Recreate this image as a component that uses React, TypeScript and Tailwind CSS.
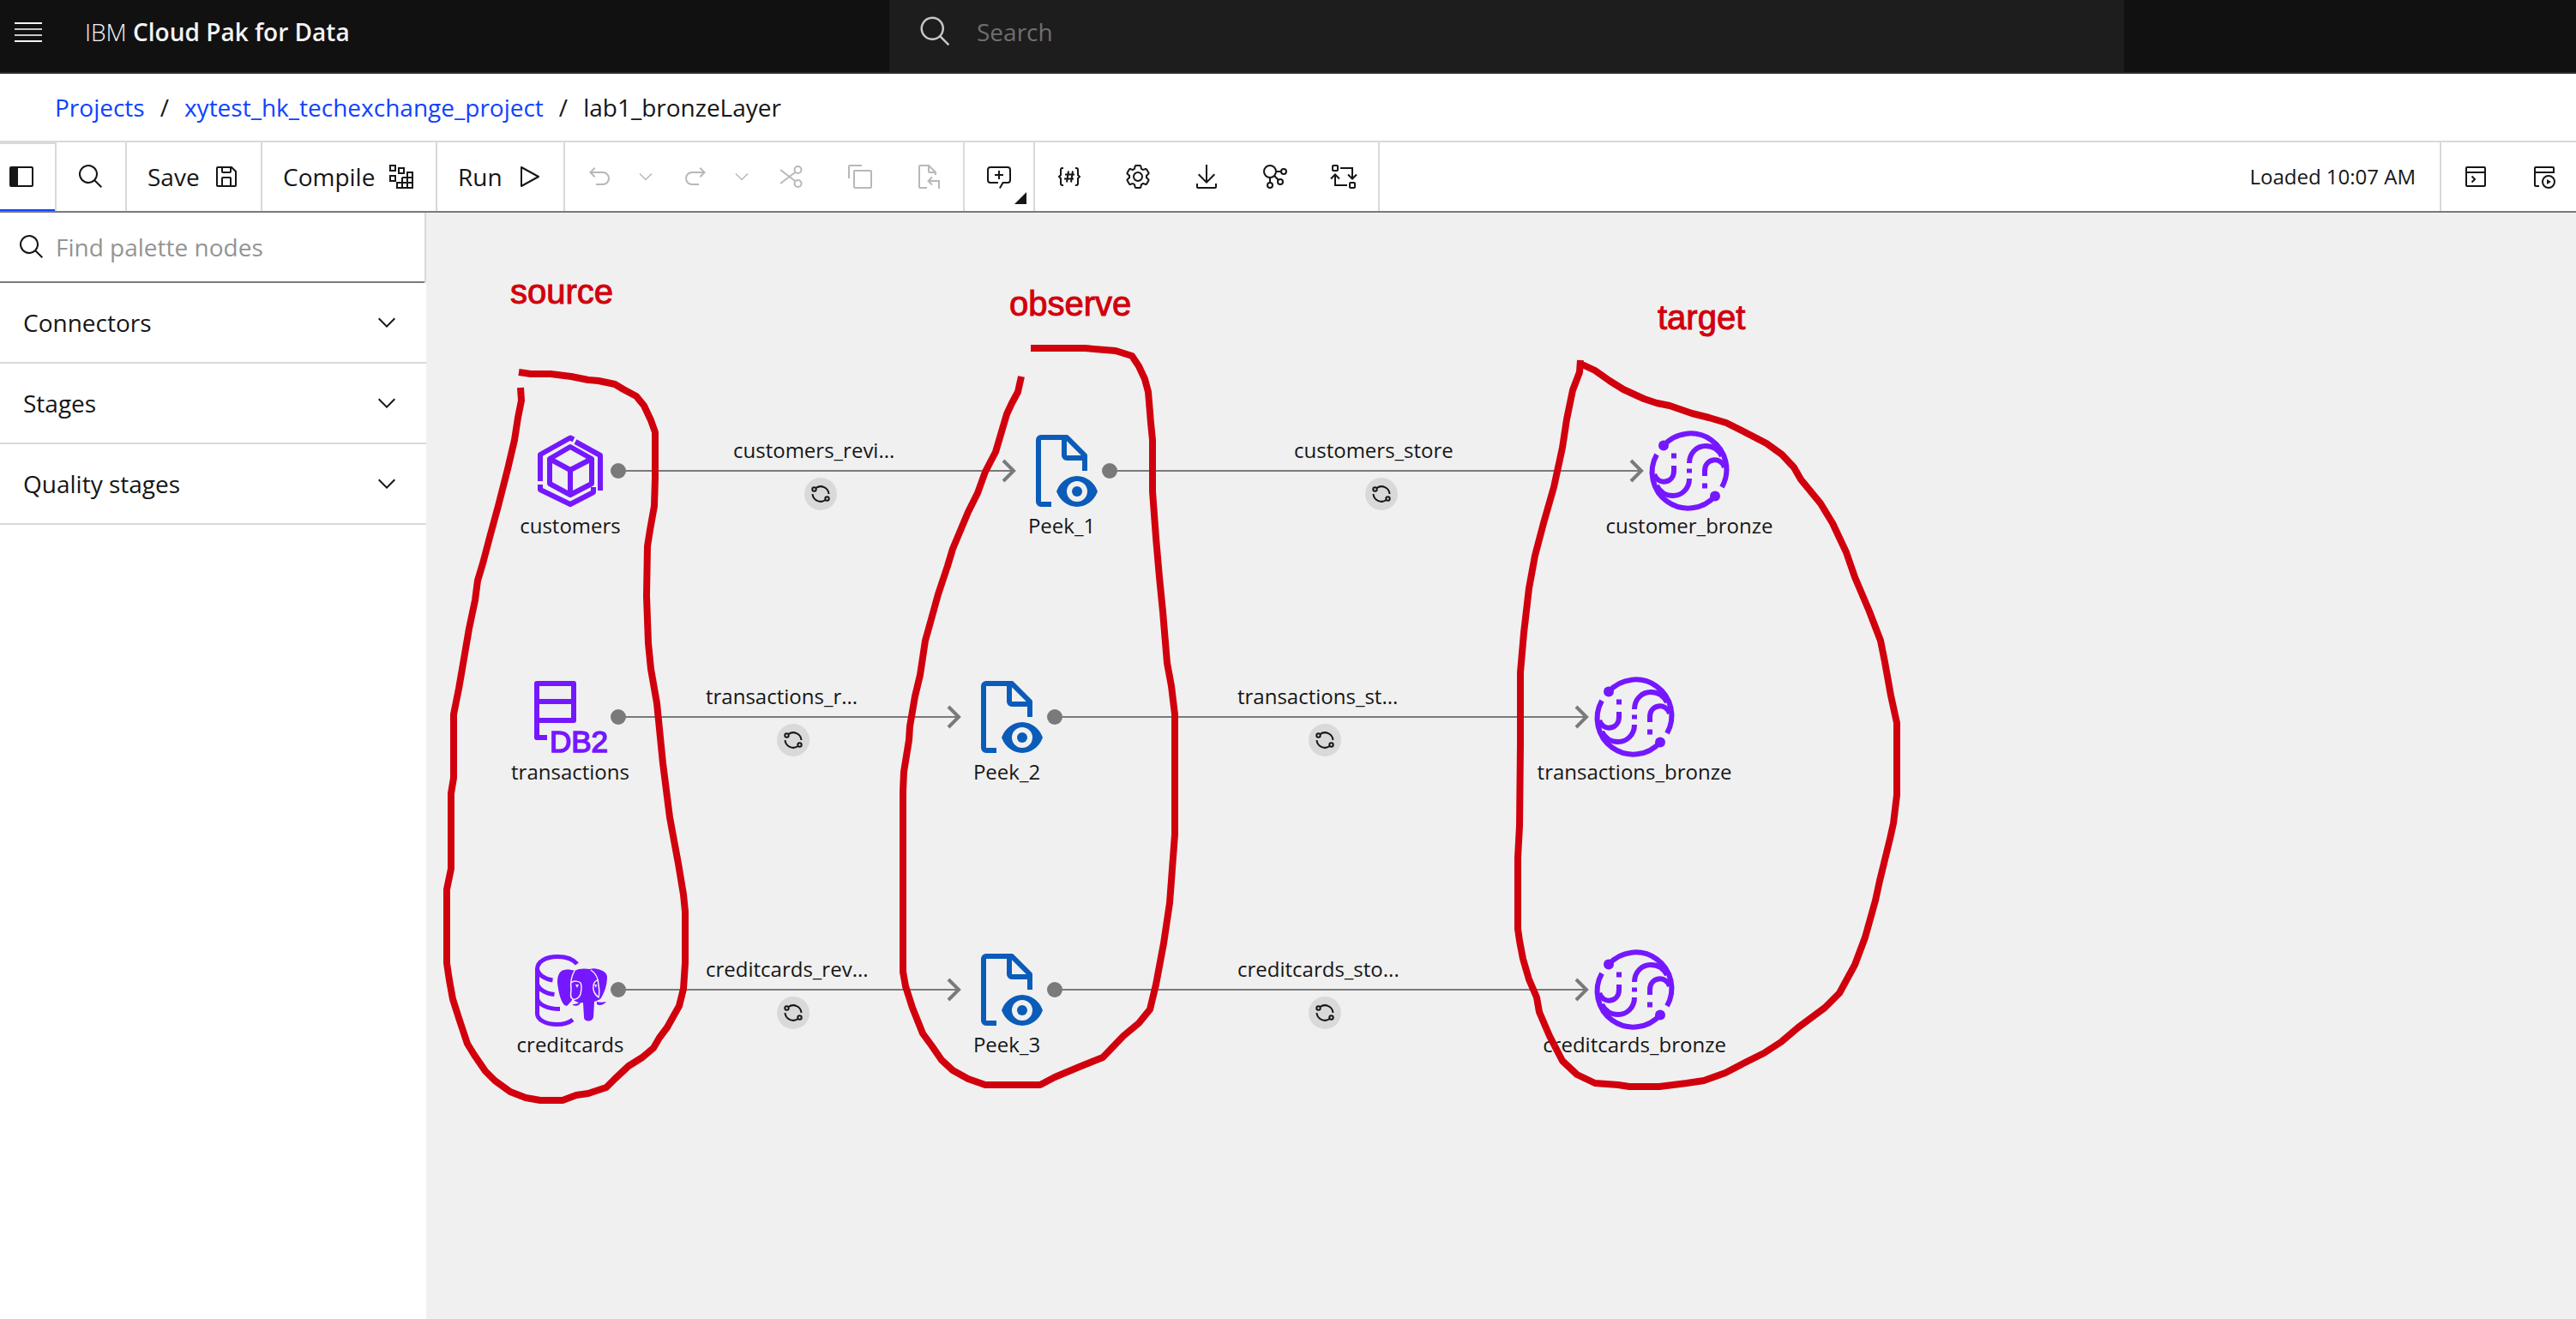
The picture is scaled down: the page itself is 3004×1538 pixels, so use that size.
import React from "react";

type IconProps = { className?: string; children: React.ReactNode };

/* 32-unit icon drawn with filled shapes */
function Solid({ className = "size-8", children }: IconProps) {
  return (
    <svg viewBox="0 0 32 32" fill="currentColor" aria-hidden="true" className={`shrink-0 ${className}`}>
      {children}
    </svg>
  );
}

/* 32-unit icon drawn with 2-unit strokes */
function Line({ className = "size-8", children }: IconProps) {
  return (
    <svg viewBox="0 0 32 32" fill="none" stroke="currentColor" strokeWidth="2" aria-hidden="true" className={`shrink-0 ${className}`}>
      {children}
    </svg>
  );
}

const SearchIcon = ({ className }: { className?: string }) => (
  <Solid className={className}>
    <path d="M29,27.586l-7.552-7.552a11.018,11.018,0,1,0-1.414,1.414L27.586,29ZM4,13a9,9,0,1,1,9,9A9.01,9.01,0,0,1,4,13Z" />
  </Solid>
);

const ChevronDown = ({ className }: { className?: string }) => (
  <Solid className={className}>
    <path d="M16 22 6 12l1.4-1.4 8.6 8.6 8.6-8.6L26 12z" />
  </Solid>
);

const PanelIcon = () => (
  <Solid>
    <path d="M28,4H4A2,2,0,0,0,2,6V26a2,2,0,0,0,2,2H28a2,2,0,0,0,2-2V6A2,2,0,0,0,28,4Zm0,22H12V6H28Z" />
  </Solid>
);

const SaveIcon = () => (
  <Solid>
    <path d="M27.71,9.29l-5-5A1,1,0,0,0,22,4H6A2,2,0,0,0,4,6V26a2,2,0,0,0,2,2H26a2,2,0,0,0,2-2V10A1,1,0,0,0,27.71,9.29ZM12,6h8v4H12Zm8,20H12V18h8Zm2,0V18a2,2,0,0,0-2-2H12a2,2,0,0,0-2,2v8H6V6h4v4a2,2,0,0,0,2,2h8a2,2,0,0,0,2-2V6.41l4,4V26Z" />
  </Solid>
);

const CompileIcon = () => (
  <Line>
    <path d="M3 3h6v6H3zM13 6h6v6h-6zM23 11h6v6h-6zM3 15h6v6H3z" />
    <path d="M17 17h12v12H11v-6h18M17 17v12M23 17v12" />
  </Line>
);

const RunIcon = () => (
  <Line>
    <path d="M7 5v22l20-11z" strokeLinejoin="round" />
  </Line>
);

const UndoIcon = () => (
  <Solid>
    <path d="M20,10H7.815l3.587-3.586L10,5,4,11,10,17l1.402-1.415L7.818,12H20a6,6,0,0,1,0,12H12v2h8a8,8,0,0,0,0-16Z" />
  </Solid>
);

const RedoIcon = () => (
  <Solid>
    <path d="M12,10H24.185l-3.587-3.586L22,5,28,11,22,17l-1.402-1.415L24.182,12H12a6,6,0,0,0,0,12h8v2H12a8,8,0,0,1,0-16Z" />
  </Solid>
);

const CutIcon = () => (
  <Line>
    <circle cx="23.5" cy="8" r="4" />
    <circle cx="23.5" cy="24" r="4" />
    <path d="M3 8l17.5 13.2M3 24L20.500 10.800" />
  </Line>
);

const CopyIcon = () => (
  <Line>
    <rect x="9" y="9" width="20" height="20" rx="1" />
    <path d="M3 18V4a1 1 0 0 1 1-1h14" />
  </Line>
);

const PasteIcon = () => (
  <Line>
    <path d="M14 29H6a1 1 0 0 1-1-1V4a1 1 0 0 1 1-1h10l8 8v3M16 3v7a1 1 0 0 0 1 1h7" />
    <path d="M20 16.500l-4.500 4.500 4.500 4.500M15.500 21H28v9" />
  </Line>
);

const CommentIcon = () => (
  <Solid>
    <path d="M17.74,30,16,29l4-7h6a2,2,0,0,0,2-2V8a2,2,0,0,0-2-2H6A2,2,0,0,0,4,8V20a2,2,0,0,0,2,2h9v2H6a4,4,0,0,1-4-4V8A4,4,0,0,1,6,4H26a4,4,0,0,1,4,4V20a4,4,0,0,1-4,4H21.160Z" />
    <path d="M17 9h-2v4h-4v2h4v4h2v-4h4v-2h-4z" />
  </Solid>
);

const ParameterIcon = () => (
  <Line>
    <path d="M9 6H8a2 2 0 0 0-2 2v6l-2 2 2 2v6a2 2 0 0 0 2 2h1M23 6h1a2 2 0 0 1 2 2v6l2 2-2 2v6a2 2 0 0 1-2 2h-1" />
    <path d="M15 9.500l-2 13M20 9.500l-2 13M11 13.500h11M10 18.500h11" />
  </Line>
);

const GearIcon = () => (
  <Solid>
    <path d="M27,16.76c0-.25,0-.5,0-.76s0-.51,0-.77l1.920-1.680A2,2,0,0,0,29.300,11L26.940,7a2,2,0,0,0-1.730-1,2,2,0,0,0-.64.1l-2.430.82a11.350,11.350,0,0,0-1.310-.75l-.51-2.520a2,2,0,0,0-2-1.610H13.640a2,2,0,0,0-2,1.610l-.51,2.520a11.480,11.480,0,0,0-1.320.75L7.430,6.060A2,2,0,0,0,6.790,6,2,2,0,0,0,5.060,7L2.700,11a2,2,0,0,0,.41,2.510L5,15.240c0,.25,0,.5,0,.76s0,.51,0,.77L3.110,18.450A2,2,0,0,0,2.700,21L5.060,25a2,2,0,0,0,1.730,1,2,2,0,0,0,.64-.1l2.430-.82a11.350,11.350,0,0,0,1.310.75l.51,2.520a2,2,0,0,0,2,1.610h4.720a2,2,0,0,0,2-1.610l.51-2.520a11.480,11.480,0,0,0,1.320-.75l2.420.82a2,2,0,0,0,.64.1,2,2,0,0,0,1.730-1L29.300,21a2,2,0,0,0-.41-2.510ZM25.210,24l-3.430-1.160a8.860,8.860,0,0,1-2.710,1.570L18.360,28H13.640l-.71-3.550a9.360,9.360,0,0,1-2.700-1.570L6.790,24,4.430,20l2.720-2.400a8.900,8.900,0,0,1,0-3.130L4.430,12,6.790,8l3.430,1.160a8.860,8.860,0,0,1,2.710-1.570L13.640,4h4.720l.71,3.550a9.360,9.360,0,0,1,2.700,1.570L25.210,8,27.570,12l-2.720,2.400a8.900,8.900,0,0,1,0,3.130L27.570,20Z" />
    <path d="M16,22a6,6,0,1,1,6-6A5.940,5.940,0,0,1,16,22Zm0-10a3.910,3.910,0,0,0-4,4,3.910,3.910,0,0,0,4,4,3.910,3.910,0,0,0,4-4A3.910,3.910,0,0,0,16,12Z" />
  </Solid>
);

const DownloadIcon = () => (
  <Solid>
    <path d="M26,24v4H6V24H4v4a2,2,0,0,0,2,2H26a2,2,0,0,0,2-2V24ZM26 14l-1.410-1.410L17 20.170V2h-2v18.170l-7.590-7.580L6 14l10 10z" />
  </Solid>
);

const FlowIcon = () => (
  <Line>
    <circle cx="10" cy="10" r="7" />
    <circle cx="26" cy="10" r="3" />
    <circle cx="22" cy="22" r="3" />
    <circle cx="10" cy="26" r="3" />
    <path d="M17 10h6M15 15l5 5M10 17v6" />
  </Line>
);

const ReplaceIcon = () => (
  <Line>
    <rect x="3" y="3" width="6" height="6" rx="1" />
    <rect x="23" y="23" width="6" height="6" rx="1" />
    <path d="M12 6h14v12M21 13.500l5 5 5-5M20 26H6V14M1 18.500l5-5 5 5" />
  </Line>
);

const ConsoleIcon = () => (
  <Line>
    <rect x="5" y="5" width="22" height="22" rx="1" />
    <path d="M5 11h22M11.500 15.500l3.500 3.500-3.500 3.500" />
  </Line>
);

const HistoryIcon = () => (
  <Line>
    <path d="M10 27H6a1 1 0 0 1-1-1V6a1 1 0 0 1 1-1h20a1 1 0 0 1 1 1v5H5" />
    <circle cx="21" cy="22" r="7" />
    <path d="M19 19v6l5-3z" fill="currentColor" stroke="none" />
  </Line>
);

const SyncIcon = () => (
  <svg viewBox="0 0 24 24" fill="none" stroke="currentColor" strokeWidth="2" aria-hidden="true" className="size-6">
    <circle cx="4.500" cy="6.500" r="2.200" />
    <circle cx="19.500" cy="17.500" r="2.200" />
    <path d="M6.500 5A9.500 9.500 0 0 1 21.500 12M2.500 12A9.500 9.500 0 0 0 17.500 19" />
  </svg>
);

const nodeIconClass = "size-24 shrink-0 overflow-visible";

const CubeArt = () => (
  <svg viewBox="0 0 96 96" fill="none" stroke="#7517ff" strokeWidth="6" strokeLinejoin="round" aria-hidden="true" className={nodeIconClass}>
    <path d="M13 60V29L48 9.500l4 2" />
    <path d="M54 14l29 16v41" />
    <path d="M13 64v6l35 17 27-14v-6" />
    <path d="M48 20l25 14v29L48 76 24 63V34z" />
    <path d="M24 34l24 13 25-13M48 47v29" />
  </svg>
);

const Db2Art = () => (
  <svg viewBox="0 0 96 96" aria-hidden="true" className={nodeIconClass}>
    <path d="M21 72H9V9h43v43H9M9 30h43" fill="none" stroke="#7517ff" strokeWidth="6" strokeLinejoin="round" />
    <text x="24" y="89" fill="#7517ff" stroke="#7517ff" strokeWidth="1.500" className="font-['Liberation_Sans',sans-serif] text-[35px]">DB2</text>
  </svg>
);

const PostgresArt = () => (
  <svg viewBox="0 0 96 96" aria-hidden="true" className={nodeIconClass}>
    <g fill="none" stroke="#7517ff" strokeWidth="5">
      <path d="M56 18C51 12 42 9.500 33 9.500 20 9.500 9.500 15 9.500 24v52c0 7 10 12.500 23 12.500 7 0 14-2 18.500-5.500" />
      <path d="M9.500 24c1 6 8 11.500 18 13M9.500 41c1 6 9 11.500 20 12.500M9.500 58c1 7 11 12.500 26.500 12.500" />
    </g>
    <g fill="#7517ff">
      <path d="M53 26c-5-2-11-2-15 0-4 3-5 8-5 14 1 9 3 18 6 23 2 4 5 5 7 2l5-6c4 4 8 5 12 4l1 17c0 6 10 6 11 0l1-18c3-1 5-2 7-3 5-7 8-17 8-26 0-5-6-8-11-9-3-1-6-1-9 0-6-1-13-1-18 2z" />
      <path d="M51 65c4 0 6-1 9-3 0 4-5 6-9 4zM79 62c3 1 7 1 11 0-3 4-8 5-11 3z" />
    </g>
    <g fill="none" stroke="#f0f0f0" strokeWidth="1.500">
      <path d="M53 26c-4 7-5 14-4 21 0 6-2 10 2 12 4 1 8-2 9-6 1-5 2-9 0-13-2-2-8-3-11 0" />
      <path d="M72 25c6 4 9 11 9 18 1 5 1 10 0 14-4-3-7-8-6-14 1-5 3-6 6-6" />
    </g>
    <path d="M54 42h4l-2 4zM76 42h3l-1 4z" fill="#f0f0f0" />
  </svg>
);

const PeekArt = () => (
  <svg viewBox="0 0 32 32" fill="#0b5cb9" aria-hidden="true" className={nodeIconClass}>
    <circle cx="22" cy="24" r="2" />
    <path d="M29.777,23.479A8.640,8.640,0,0,0,22,18a8.640,8.640,0,0,0-7.777,5.479L14,24l.223.522A8.640,8.640,0,0,0,22,30a8.640,8.640,0,0,0,7.777-5.478L30,24ZM22,28a4,4,0,1,1,4-4A4.005,4.005,0,0,1,22,28Z" />
    <path d="M12,28H8V4h8v6a2.006,2.006,0,0,0,2,2h6v4h2V10a.909.909,0,0,0-.3-.7l-7-7A.909.909,0,0,0,18,2H8A2.006,2.006,0,0,0,6,4V28a2.006,2.006,0,0,0,2,2h4ZM18,4.400,23.600,10H18Z" />
  </svg>
);

const halfOrb = (
  <g>
    <path d="M18 18.500A42 42 0 0 1 86 67" />
    <circle cx="18" cy="18.500" r="6" fill="#7517ff" stroke="none" />
    <path d="M66 54v-6c0-15 19-17 23-4M48 39c0-12 9-20 19-20 9 0 15 4 19 12" />
    <path d="M27 27.500h6v6h-6z" fill="#7517ff" stroke="none" />
  </g>
);

const OrbArt = () => (
  <svg viewBox="0 0 96 96" fill="none" stroke="#7517ff" strokeWidth="6" aria-hidden="true" className={nodeIconClass}>
    {halfOrb}
    <g transform="rotate(180 48 48)">{halfOrb}</g>
    <path d="M45 45.500h6v5h-6z" fill="#7517ff" stroke="none" />
  </svg>
);

const nodes = [
  { label: "customers", Art: CubeArt, place: "left-[48px] top-[253px]" },
  { label: "transactions", Art: Db2Art, place: "left-[48px] top-[540px]" },
  { label: "creditcards", Art: PostgresArt, place: "left-[48px] top-[858px]" },
  { label: "Peek_1", Art: PeekArt, place: "left-[621px] top-[253px]" },
  { label: "Peek_2", Art: PeekArt, place: "left-[557px] top-[540px]" },
  { label: "Peek_3", Art: PeekArt, place: "left-[557px] top-[858px]" },
  { label: "customer_bronze", Art: OrbArt, place: "left-[1353px] top-[253px]" },
  { label: "transactions_bronze", Art: OrbArt, place: "left-[1289px] top-[540px]" },
  { label: "creditcards_bronze", Art: OrbArt, place: "left-[1289px] top-[858px]" },
];

const linkLabels = [
  { label: "customers_revi...", place: "left-[358px] top-[261px]" },
  { label: "transactions_r...", place: "left-[326px] top-[548px]" },
  { label: "creditcards_rev...", place: "left-[326px] top-[866px]" },
  { label: "customers_store", place: "left-[1012px] top-[261px]" },
  { label: "transactions_st...", place: "left-[946px] top-[548px]" },
  { label: "creditcards_sto...", place: "left-[946px] top-[866px]" },
];

const links = [
  { from: 224, to: 687, y: 301 },
  { from: 797, to: 1419, y: 301 },
  { from: 224, to: 623, y: 588 },
  { from: 733, to: 1355, y: 588 },
  { from: 224, to: 623, y: 906 },
  { from: 733, to: 1355, y: 906 },
];

const notes = [
  { label: "source", place: "left-[98px] top-[72px]" },
  { label: "observe", place: "left-[680px] top-[86px]" },
  { label: "target", place: "left-[1436px] top-[102px]" },
];

/* Freehand marker strokes, recorded in window coordinates */
const markerStrokes = [
  "605,434 619,436 642,436 666,439 686,443 698,444 717,448 727,454 742,462 751,473 759,490 764,504 764,557 763,590 758,618 755,637 754,695 756,750 759,780 766,820 773,890 781,953 791,1007 797,1043 799,1063 799,1123 797,1153 792,1173 778,1198 769,1210 762,1222 749,1233 733,1243 717,1258 707,1268 686,1275 672,1277 656,1283 630,1283 613,1280 595,1273 577,1260 566,1249 553,1230 545,1217 536,1190 528,1165 524,1143 521,1123 521,1037 526,1013 526,925 529,907 529,833 535,803 539,780 547,733 554,700 557,677 563,657 572,623 581,590 592,547 600,513 604,487 608,467 607,452",
  "1202,406 1265,406 1301,409 1320,415 1328,427 1335,442 1339,457 1342,493 1344,513 1344,573 1348,627 1352,673 1356,713 1361,773 1366,800 1370,833 1370,973 1367,1013 1364,1053 1357,1100 1348,1148 1341,1177 1328,1193 1310,1208 1286,1233 1261,1243 1230,1256 1213,1265 1149,1265 1129,1258 1111,1248 1098,1236 1087,1220 1076,1205 1064,1175 1056,1150 1053,1133 1053,923 1054,900 1060,863 1061,847 1067,812 1073,787 1079,747 1086,722 1094,693 1105,660 1111,640 1129,597 1140,575 1149,550 1161,527 1174,483 1180,470 1187,457 1191,439",
  "1843,424 1860,432 1877,444 1893,454 1917,465 1932,470 1947,473 1973,482 1993,487 2013,493 2033,503 2060,517 2078,530 2092,545 2100,559 2123,587 2137,610 2153,644 2163,673 2180,713 2193,747 2198,772 2205,811 2212,843 2212,927 2208,960 2204,978 2192,1027 2187,1050 2175,1093 2163,1125 2145,1158 2128,1175 2097,1198 2077,1215 2057,1228 2033,1240 2012,1251 1987,1260 1967,1263 1935,1267 1900,1267 1887,1265 1860,1263 1839,1253 1822,1237 1807,1208 1795,1180 1792,1163 1783,1142 1776,1118 1772,1097 1770,1083 1770,1000 1772,963 1773,868 1773,784 1777,738 1783,686 1790,648 1800,610 1812,568 1822,522 1827,489 1834,455 1842,434 1843,420",
];

function ToolButton({ label, disabled, className = "w-20", children }: { label: string; disabled?: boolean; className?: string; children: React.ReactNode }) {
  return (
    <button type="button" aria-label={label} disabled={disabled} className={`flex h-full shrink-0 items-center justify-center disabled:text-[#b8b8b8] ${className}`}>
      {children}
    </button>
  );
}

function Header() {
  return (
    <header className="grid h-[86px] grid-cols-[1037px_1fr_527px] border-b-2 border-[#2d2a2a] bg-[#111111] text-[#f4f4f4]">
      <div className="flex items-center gap-[50px] pb-[10px] pl-[17px]">
        <button type="button" aria-label="Open menu" className="flex w-8 flex-col gap-[5px]">
          <span className="h-0.5 bg-[#f4f4f4]" />
          <span className="h-0.5 bg-[#c6c6c6]" />
          <span className="h-0.5 bg-[#c6c6c6]" />
          <span className="h-0.5 bg-[#f4f4f4]" />
        </button>
        <a href="#home" className="text-[28px] leading-9">
          <span className="font-light">IBM</span> <span className="font-semibold">Cloud Pak for Data</span>
        </a>
      </div>
      <label className="flex items-center gap-7 bg-[#1d1d1d] pb-[10px] pl-[34px]">
        <SearchIcon className="size-10 text-[#c6c6c6]" />
        <input type="search" aria-label="Search" placeholder="Search" className="min-w-0 flex-1 bg-transparent text-[28px] leading-9 outline-none placeholder:text-[#6f6f6f]" />
      </label>
    </header>
  );
}

function Breadcrumb() {
  return (
    <nav aria-label="Breadcrumb" className="flex h-[78px] items-center gap-[18px] pl-16 text-[28px] leading-9">
      <a href="#projects" className="text-[#0f43fe]">Projects</a>
      <span>/</span>
      <a href="#project" className="text-[#0f43fe]">xytest_hk_techexchange_project</a>
      <span>/</span>
      <span aria-current="page">lab1_bronzeLayer</span>
    </nav>
  );
}

function Toolbar() {
  return (
    <div role="toolbar" aria-label="Flow actions" className="flex h-[84px] border-t-2 border-b-2 border-t-[#d9d9d9] border-b-[#7a7a7a]">
      <div className="flex border-r-2 border-[#d9d9d9]">
        <ToolButton label="Toggle palette" className="w-16 border-t-2 border-b-2 border-t-[#d9d9d9] border-b-[#0f43fe] pr-[14px]">
          <PanelIcon />
        </ToolButton>
      </div>
      <div className="flex border-r-2 border-[#d9d9d9]">
        <ToolButton label="Find in flow"><SearchIcon /></ToolButton>
      </div>
      <button type="button" className="flex w-[158px] items-center justify-between border-r-2 border-[#d9d9d9] px-6 text-[28px] leading-9">
        Save <SaveIcon />
      </button>
      <button type="button" className="flex w-[204px] items-center justify-between border-r-2 border-[#d9d9d9] px-6 text-[28px] leading-9">
        Compile <CompileIcon />
      </button>
      <button type="button" className="flex w-[149px] items-center justify-between border-r-2 border-[#d9d9d9] px-6 text-[28px] leading-9">
        Run <RunIcon />
      </button>
      <div className="flex border-r-2 border-[#d9d9d9]">
        <ToolButton label="Undo" disabled><UndoIcon /></ToolButton>
        <ToolButton label="Undo history" disabled className="w-8 pr-1"><ChevronDown className="size-6" /></ToolButton>
        <ToolButton label="Redo" disabled><RedoIcon /></ToolButton>
        <ToolButton label="Redo history" disabled className="w-8 pr-1"><ChevronDown className="size-6" /></ToolButton>
        <ToolButton label="Cut" disabled><CutIcon /></ToolButton>
        <ToolButton label="Copy" disabled><CopyIcon /></ToolButton>
        <ToolButton label="Paste" disabled><PasteIcon /></ToolButton>
      </div>
      <div className="relative flex border-r-2 border-[#d9d9d9]">
        <ToolButton label="Add comment"><CommentIcon /></ToolButton>
        <svg viewBox="0 0 14 14" aria-hidden="true" className="absolute right-2 bottom-2 size-[14px] fill-[#161616]">
          <path d="M14 0v14H0z" />
        </svg>
      </div>
      <div className="flex border-r-2 border-[#d9d9d9]">
        <ToolButton label="Parameters"><ParameterIcon /></ToolButton>
        <ToolButton label="Settings"><GearIcon /></ToolButton>
        <ToolButton label="Download"><DownloadIcon /></ToolButton>
        <ToolButton label="Lineage"><FlowIcon /></ToolButton>
        <ToolButton label="Convert flow"><ReplaceIcon /></ToolButton>
      </div>
      <p className="ml-auto flex items-center pr-7 text-[24px] leading-8">Loaded 10:07 AM</p>
      <div className="flex items-center gap-12 border-l-2 border-[#d9d9d9] pr-[21px] pl-6">
        <button type="button" aria-label="Show logs"><ConsoleIcon /></button>
        <button type="button" aria-label="Run history"><HistoryIcon /></button>
      </div>
    </div>
  );
}

function Palette() {
  return (
    <aside aria-label="Palette" className="w-[497px] shrink-0 bg-white">
      <div className="border-r-2 border-[#d9d9d9]">
        <label className="flex h-[82px] items-center gap-3 border-b-2 border-[#7a7a7a] pl-[21px]">
          <SearchIcon />
          <input type="search" aria-label="Find palette nodes" placeholder="Find palette nodes" className="min-w-0 flex-1 bg-transparent text-[28px] leading-9 outline-none placeholder:text-[#949494]" />
        </label>
      </div>
      {["Connectors", "Stages", "Quality stages"].map((name) => (
        <button key={name} type="button" aria-expanded="false" className="flex h-[94px] w-full items-center justify-between border-b-2 border-[#d9d9d9] pr-[30px] pl-[27px] text-[28px] leading-9">
          {name}
          <ChevronDown />
        </button>
      ))}
    </aside>
  );
}

function Canvas() {
  return (
    <main className="relative flex-1 overflow-hidden bg-[#f0f0f0]">
      <svg aria-hidden="true" className="absolute inset-0 size-full">
        {links.map(({ from, to, y }) => (
          <g key={`${from}-${y}`} stroke="#7a7a7a" fill="none">
            <path d={`M${from} ${y}H${to}`} strokeWidth="2" />
            <path d={`M${to - 14} ${y - 12}l12 12-12 12`} strokeWidth="4" />
            <circle cx={from} cy={y} r="9" fill="#7a7a7a" stroke="none" />
          </g>
        ))}
      </svg>
      {linkLabels.map(({ label, place }) => (
        <div key={label} className={`absolute flex w-[204px] flex-col gap-4 ${place}`}>
          <span className="text-[24px] leading-8 whitespace-nowrap">{label}</span>
          <span className="flex size-[38px] items-center justify-center self-center rounded-full bg-[#d9d9d9]">
            <SyncIcon />
          </span>
        </div>
      ))}
      {nodes.map(({ label, Art, place }) => (
        <div key={label} className={`absolute flex w-60 flex-col items-center ${place}`}>
          <Art />
          <span className="text-[24px] leading-8 whitespace-nowrap">{label}</span>
        </div>
      ))}
      <svg aria-hidden="true" className="pointer-events-none absolute inset-0 size-full">
        <g transform="translate(-497 -248)" fill="none" stroke="#d1000d" strokeWidth="8" strokeLinejoin="round">
          {markerStrokes.map((points) => (
            <polyline key={points} points={points} />
          ))}
        </g>
      </svg>
      {notes.map(({ label, place }) => (
        <span key={label} className={`absolute font-['Liberation_Sans',sans-serif] text-[40px] leading-10 text-[#d1000d] [-webkit-text-stroke:1px_#d1000d] ${place}`}>
          {label}
        </span>
      ))}
    </main>
  );
}

export default function App() {
  return (
    <div className="flex min-h-screen flex-col bg-white font-['Open_Sans',sans-serif] text-[#161616]">
      <Header />
      <Breadcrumb />
      <Toolbar />
      <div className="flex flex-1">
        <Palette />
        <Canvas />
      </div>
    </div>
  );
}
